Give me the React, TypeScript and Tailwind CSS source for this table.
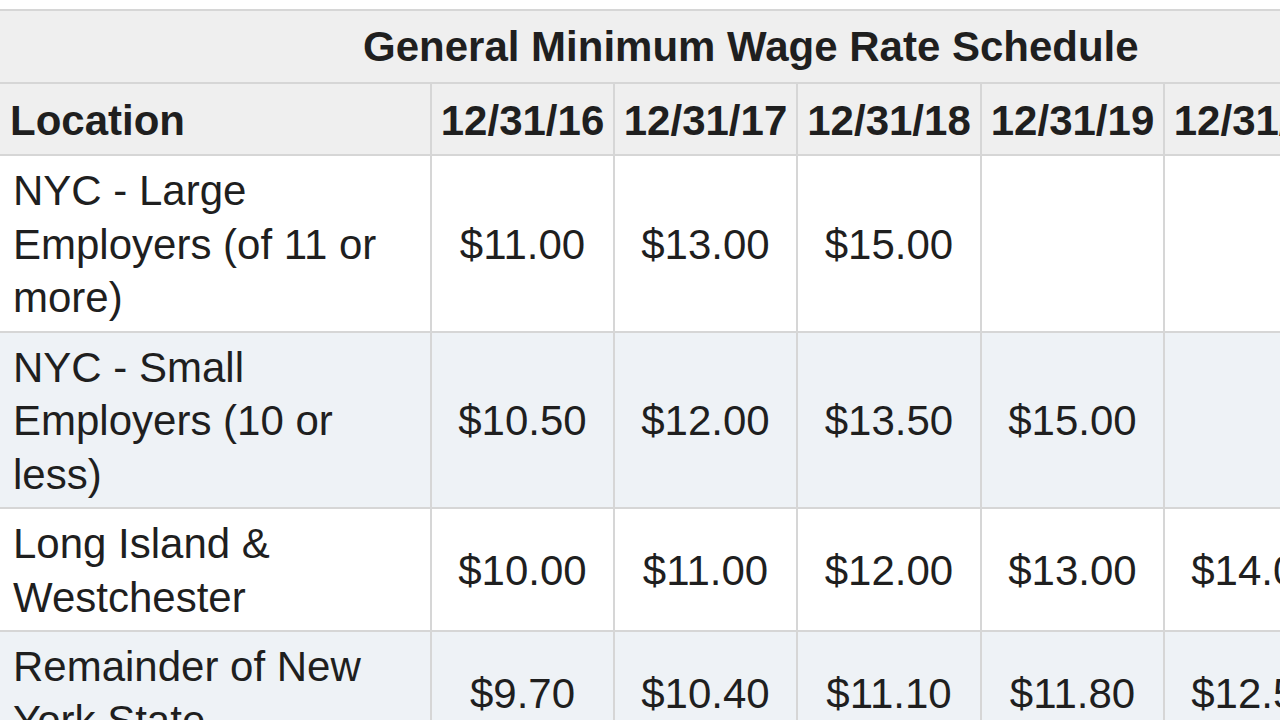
import React from "react";

const rows: { label: React.ReactNode; values: string[]; bg: string }[] = [
  {
    label: (
      <>
        NYC - Large
        <br />
        Employers (of 11 or
        <br />
        more)
      </>
    ),
    values: ["$11.00", "$13.00", "$15.00", "", "", ""],
    bg: "bg-white",
  },
  {
    label: (
      <>
        NYC - Small
        <br />
        Employers (10 or
        <br />
        less)
      </>
    ),
    values: ["$10.50", "$12.00", "$13.50", "$15.00", "", ""],
    bg: "bg-[#eef2f6]",
  },
  {
    label: (
      <>
        Long Island &amp;
        <br />
        Westchester
      </>
    ),
    values: ["$10.00", "$11.00", "$12.00", "$13.00", "$14.00", "$15.00"],
    bg: "bg-white",
  },
  {
    label: (
      <>
        Remainder of New
        <br />
        York State
      </>
    ),
    values: ["$9.70", "$10.40", "$11.10", "$11.80", "$12.50", ""],
    bg: "bg-[#eef2f6]",
  },
];

const dates = ["12/31/16", "12/31/17", "12/31/18", "12/31/19", "12/31/20", "12/31/21"];

export default function App() {
  return (
    <div
      className="w-[1280px] h-[720px] overflow-hidden bg-white pt-[9px] text-[#1f1f1f]"
      style={{ fontFamily: '"Liberation Sans", Arial, Helvetica, sans-serif' }}
    >
      <div className="grid w-[1529px] grid-cols-[430px_181px_181px_182px_181px_181px_181px] gap-[2px] bg-[#d6d6d6] pt-[2px]">
        <div className="col-span-7 bg-[#efefef] py-[7px] pl-[363px] text-[42px] font-bold leading-[57px]">
          General Minimum Wage Rate Schedule
        </div>
        <div className="bg-[#efefef] pt-[9px] pb-[5px] pl-[10px] text-[42px] font-bold leading-[56px]">
          Location
        </div>
        {dates.map((d) => (
          <div
            key={d}
            className="bg-[#efefef] pt-[9px] pb-[5px] text-center text-[42px] font-bold leading-[56px] whitespace-nowrap"
          >
            {d}
          </div>
        ))}
        {rows.map((r, i) => (
          <React.Fragment key={i}>
            <div className={`${r.bg} pt-[8px] pb-[6px] pl-[13px] pr-[8px] text-[42px] leading-[53.5px]`}>
              {r.label}
            </div>
            {r.values.map((v, j) => (
              <div
                key={j}
                className={`${r.bg} flex items-center justify-center pt-[8px] pb-[6px] text-[42px] leading-[53.5px] whitespace-nowrap`}
              >
                {v}
              </div>
            ))}
          </React.Fragment>
        ))}
      </div>
    </div>
  );
}
